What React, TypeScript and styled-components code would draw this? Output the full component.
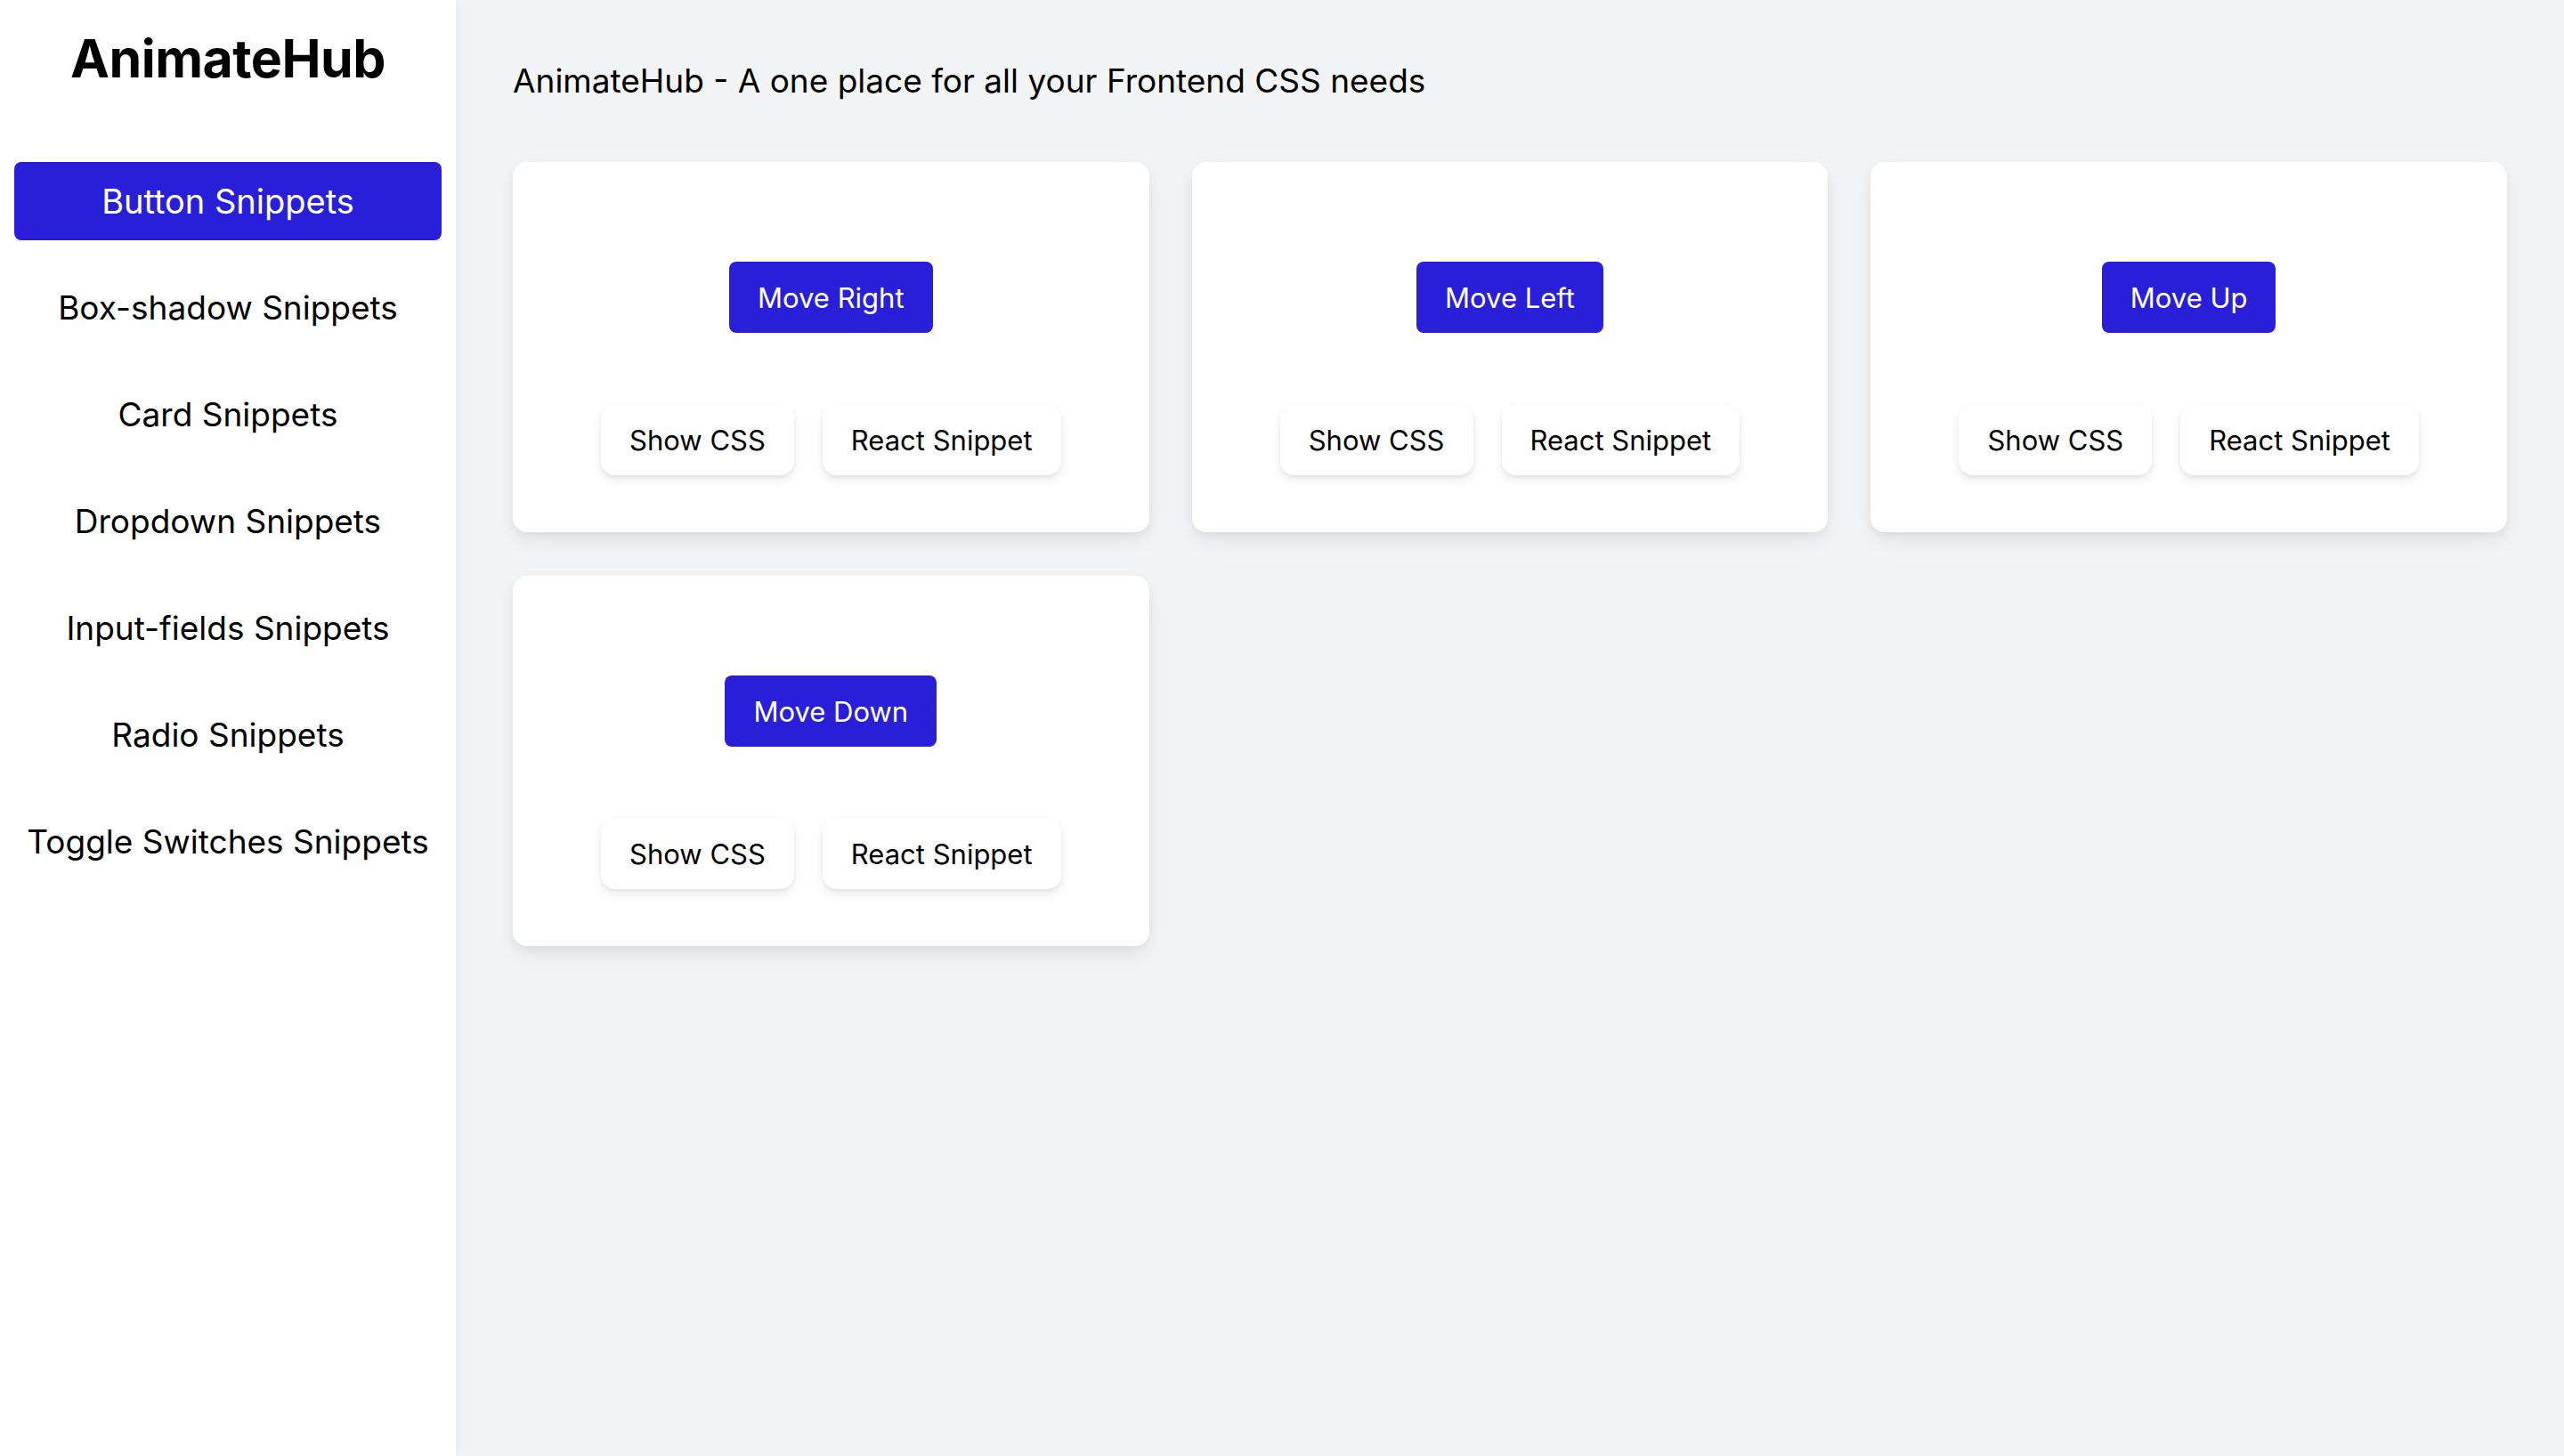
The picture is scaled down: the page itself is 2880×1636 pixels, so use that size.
import React from "react";
import styled, { createGlobalStyle } from "styled-components";

const GlobalStyle = createGlobalStyle`
  * { box-sizing: border-box; }
  html, body { margin: 0; padding: 0; }
  body {
    font-family: Inter, "Noto Sans", "Liberation Sans", sans-serif;
    background: #f3f4f6;
    color: #000;
  }
`;

const Layout = styled.div`
  display: flex;
  min-height: 1636px;
`;

const Sidebar = styled.aside`
  width: 512px;
  flex-shrink: 0;
  background: #ffffff;
  box-shadow: 6px 0 14px rgba(0, 0, 0, 0.035);
  display: flex;
  flex-direction: column;
  position: relative;
  z-index: 1;
`;

const Logo = styled.h1`
  margin: 0;
  padding-top: 26px;
  height: 182px;
  font-size: 59px;
  line-height: 80px;
  font-weight: 700;
  text-align: center;
  letter-spacing: -0.5px;
`;

const Nav = styled.nav`
  display: flex;
  flex-direction: column;
  gap: 32px;
  padding: 0 16px;
`;

const NavItem = styled.a<{ $active?: boolean }>`
  display: block;
  height: 88px;
  padding: 16px 0;
  font-size: ${(p) => (p.$active ? "38px" : "37px")};
  line-height: 56px;
  text-align: center;
  border-radius: 8px;
  cursor: pointer;
  color: ${(p) => (p.$active ? "#ffffff" : "#000000")};
  background: ${(p) => (p.$active ? "#291fd8" : "transparent")};
`;

const Main = styled.main`
  flex: 1;
  padding: 64px;
`;

const Heading = styled.h2`
  margin: 0 0 64px 0;
  font-size: 37px;
  line-height: 54px;
  font-weight: 400;
  color: #000;
`;

const Grid = styled.div`
  display: grid;
  grid-template-columns: repeat(3, 1fr);
  gap: 49px 48px;
`;

const Card = styled.div`
  background: #ffffff;
  border-radius: 16px;
  padding: 64px;
  box-shadow: 0 10px 24px rgba(0, 0, 0, 0.07), 0 4px 8px rgba(0, 0, 0, 0.04);
  display: flex;
  flex-direction: column;
  align-items: center;
`;

const Preview = styled.div`
  padding: 48px 0;
  display: flex;
  justify-content: center;
`;

const DemoButton = styled.button`
  height: 80px;
  padding: 0 32px;
  border: none;
  border-radius: 8px;
  background: #291fd8;
  color: #ffffff;
  font-family: inherit;
  font-size: 31px;
  line-height: 48px;
  padding-top: 2px;
  cursor: pointer;
`;

const Actions = styled.div`
  margin-top: 32px;
  display: flex;
  gap: 32px;
`;

const ActionButton = styled.button`
  height: 80px;
  padding: 2px 32px 0;
  border: none;
  border-radius: 16px;
  background: #ffffff;
  color: #000;
  font-family: inherit;
  font-size: 31px;
  line-height: 48px;
  cursor: pointer;
  box-shadow: 0 6px 12px rgba(0, 0, 0, 0.08), 0 2px 4px rgba(0, 0, 0, 0.05);
`;

const navItems = [
  "Button Snippets",
  "Box-shadow Snippets",
  "Card Snippets",
  "Dropdown Snippets",
  "Input-fields Snippets",
  "Radio Snippets",
  "Toggle Switches Snippets",
];

const snippets = ["Move Right", "Move Left", "Move Up", "Move Down"];

export default function App() {
  return (
    <>
      <GlobalStyle />
      <Layout>
        <Sidebar>
          <Logo>AnimateHub</Logo>
          <Nav>
            {navItems.map((item, i) => (
              <NavItem key={item} $active={i === 0}>
                {item}
              </NavItem>
            ))}
          </Nav>
        </Sidebar>
        <Main>
          <Heading>AnimateHub - A one place for all your Frontend CSS needs</Heading>
          <Grid>
            {snippets.map((s) => (
              <Card key={s}>
                <Preview>
                  <DemoButton>{s}</DemoButton>
                </Preview>
                <Actions>
                  <ActionButton>Show CSS</ActionButton>
                  <ActionButton>React Snippet</ActionButton>
                </Actions>
              </Card>
            ))}
          </Grid>
        </Main>
      </Layout>
    </>
  );
}
